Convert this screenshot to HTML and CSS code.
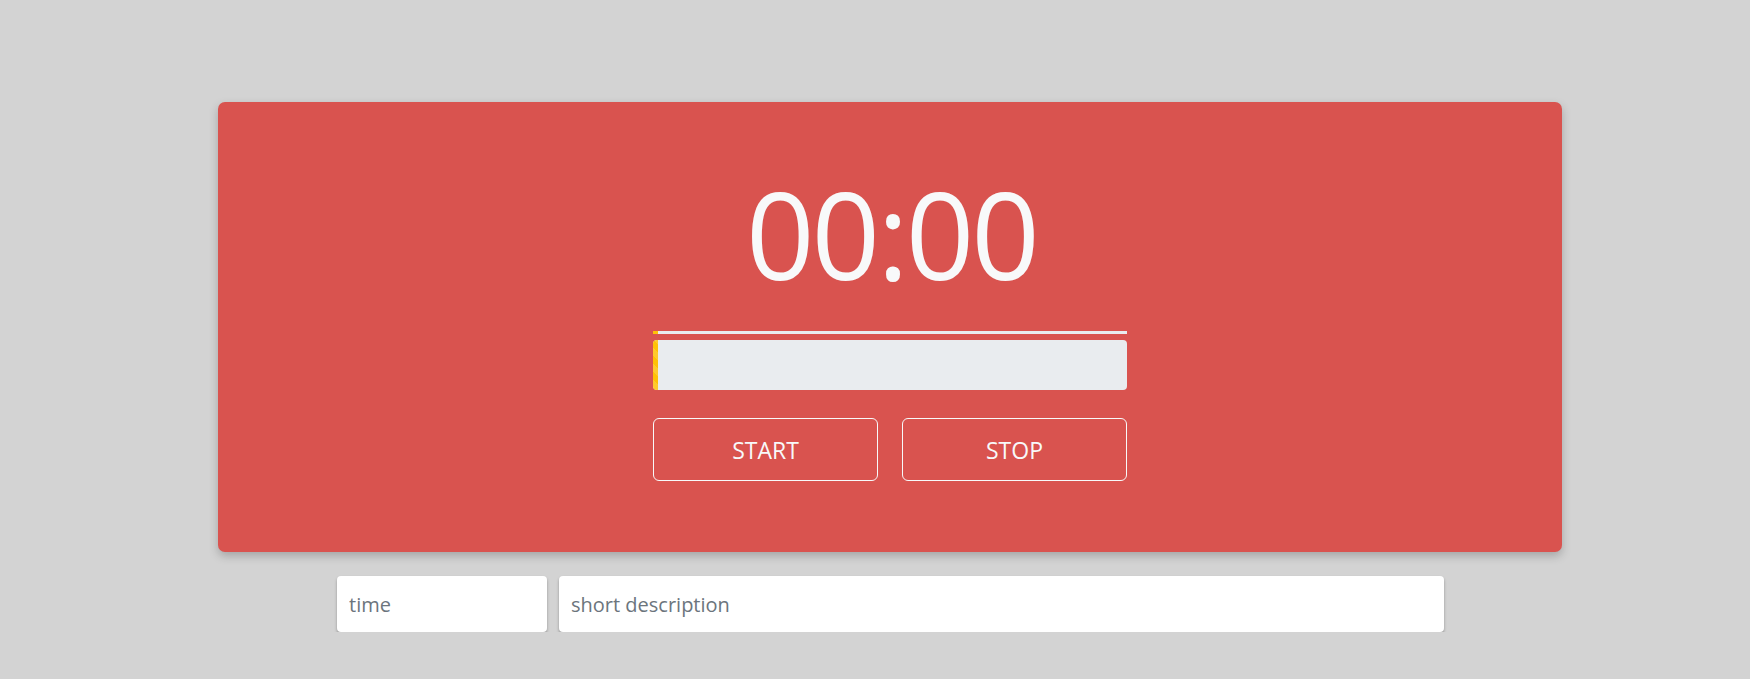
FILE: index.html
```html
<!DOCTYPE html>
<html>
<head>
<meta charset="utf-8">
<link rel="stylesheet" href="styles.css">
</head>
<body>
<div class="page">
  <div class="card">
    <div class="timer">00:00</div>
    <div class="controls">
      <div class="line"><div class="line-fill"></div></div>
      <div class="bar"><div class="bar-fill"></div></div>
      <div class="buttons">
        <button class="btn">START</button>
        <button class="btn">STOP</button>
      </div>
    </div>
  </div>
  <div class="inputs">
    <input class="field time" type="text" placeholder="time">
    <input class="field desc" type="text" placeholder="short description">
  </div>
</div>
</body>
</html>
```
FILE: styles.css
```css
html, body {
  margin: 0;
  padding: 0;
  background: #d3d3d3;
  font-family: "Open Sans", "Noto Sans", sans-serif;
  overflow: hidden;
}
.page {
  padding: 102px 188px 0 218px;
}
.card {
  background: #d9534f;
  border-radius: 7px;
  height: 450px;
  box-sizing: border-box;
  box-shadow: 0 4px 10px rgba(0,0,0,0.22);
  display: flex;
  flex-direction: column;
  align-items: center;
  padding-top: 72px;
}
.timer {
  color: #f8f9fa;
  font-size: 120px;
  line-height: 1;
  height: 157px;
  letter-spacing: -3px;
  padding-left: 3px;
}
.controls {
  width: 474px;
  display: flex;
  flex-direction: column;
}
.line {
  height: 3px;
  background: #e9ecef;
}
.line-fill {
  width: 5px;
  height: 100%;
  background: #ffc107;
}
.bar {
  margin-top: 6px;
  height: 50px;
  background: #e9ecef;
  border-radius: 4px;
  overflow: hidden;
}
.bar-fill {
  width: 5px;
  height: 100%;
  background-color: #ffc107;
  background-image: linear-gradient(45deg, rgba(255,255,255,.15) 25%, transparent 25%, transparent 50%, rgba(255,255,255,.15) 50%, rgba(255,255,255,.15) 75%, transparent 75%, transparent);
  background-size: 16px 16px;
}
.buttons {
  margin-top: 28px;
  display: flex;
  gap: 24px;
}
.btn {
  flex: 1;
  height: 63px;
  background: transparent;
  border: 1px solid #f8f9fa;
  border-radius: 6px;
  color: #f8f9fa;
  font-family: "Open Sans", "Noto Sans", sans-serif;
  font-size: 23px;
  padding: 0;
}
.inputs {
  margin-top: 24px;
  display: flex;
  gap: 12px;
  padding-left: 119px;
}
.field {
  display: block;
  height: 56px;
  box-sizing: border-box;
  border: none;
  border-radius: 4px;
  background: #fff;
  box-shadow: 0 2px 3px rgba(0,0,0,0.3);
  padding: 0 12px;
  font-family: "Open Sans", "Noto Sans", sans-serif;
  font-size: 20px;
  color: #495057;
  outline: none;
}
.field::placeholder {
  color: #6c757d;
}
.time { width: 210px; }
.desc { width: 885px; }
```
